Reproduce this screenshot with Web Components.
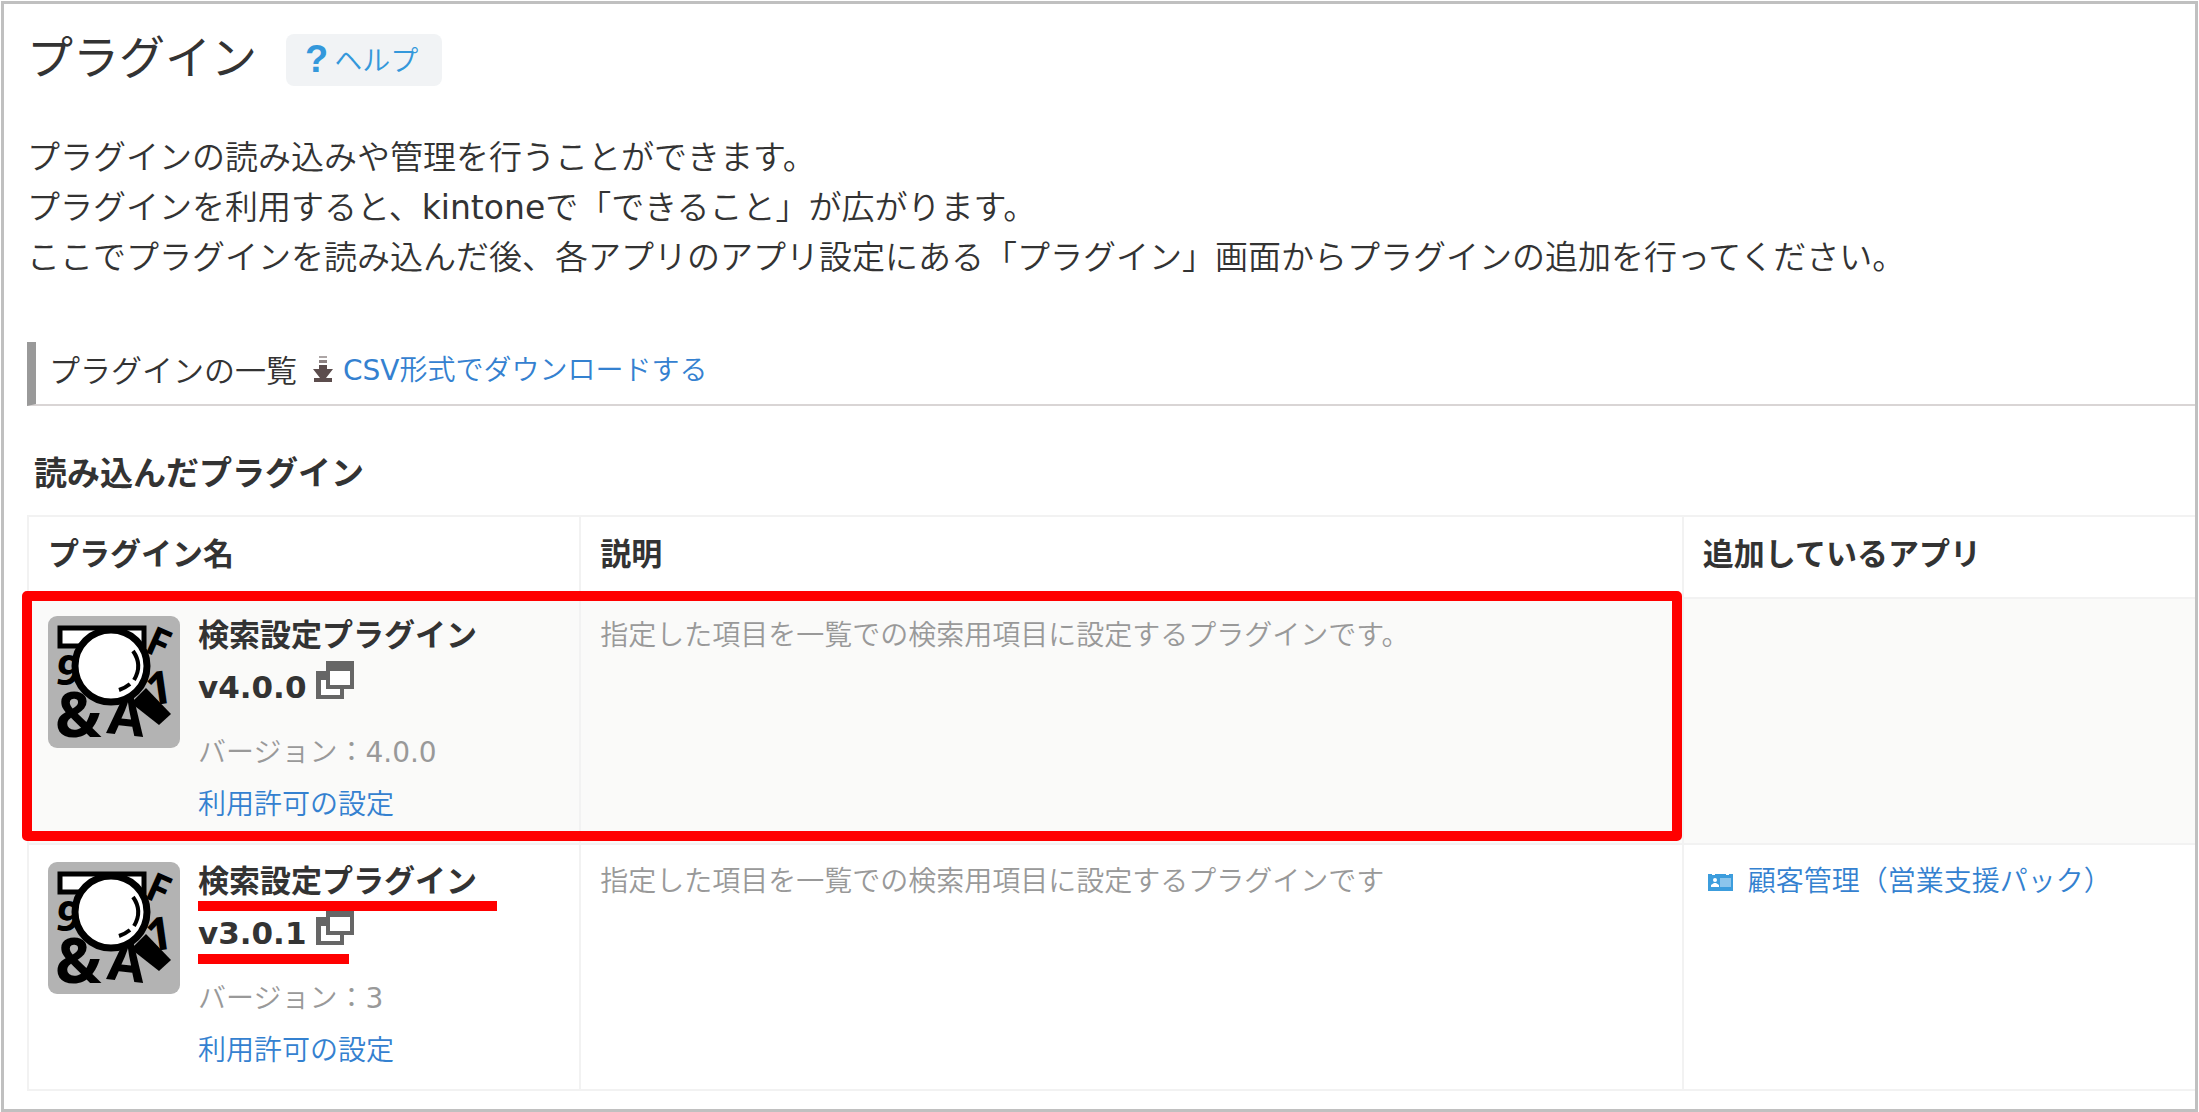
<!DOCTYPE html>
<html lang="ja">
<head>
<meta charset="utf-8">
<title>プラグイン</title>
<style>
    body {
        margin: 0;
        background: #fff;
        color: #333;
        font-family: "DejaVu Sans", "Noto Sans CJK JP DemiLight", "Noto Sans CJK JP", sans-serif;
        font-size: 28px;
        --bold: "DejaVu Sans", "Noto Sans CJK JP", sans-serif;
        --link: #3481d0;
        --muted: #999;
        --line: #f2f2f2;
        --mark: #f00;
    }
</style>
</head>
<body>
<plugin-page>
    <page-title slot="title" heading="プラグイン">ヘルプ</page-title>
    <p slot="lead">プラグインの読み込みや管理を行うことができます。<br>プラグインを利用すると、kintoneで「できること」が広がります。<br>ここでプラグインを読み込んだ後、各アプリのアプリ設定にある「プラグイン」画面からプラグインの追加を行ってください。</p>
    <section-bar heading="プラグインの一覧">CSV形式でダウンロードする</section-bar>
    <plugin-table heading="読み込んだプラグイン"></plugin-table>
</plugin-page>

<script>
class PluginPage extends HTMLElement {
    constructor() {
        super();
        this.attachShadow({ mode: 'open' });
        this.shadowRoot.innerHTML = `
            <style>
                :host {
                    display: block;
                    margin: 1px;
                    border: 3px solid #c0c0c0;
                    padding: 30px 0 18px 23px;
                }
                ::slotted(p) {
                    margin: 47px 0 59px;
                    font-size: 33px;
                    line-height: 50px;
                }
            </style>
            <slot name="title"></slot>
            <slot name="lead"></slot>
            <slot></slot>
        `;
    }
}
customElements.define('plugin-page', PluginPage);

class PageTitle extends HTMLElement {
    constructor() {
        super();
        this.attachShadow({ mode: 'open' });
        this.shadowRoot.innerHTML = `
            <style>
                :host {
                    display: flex;
                    align-items: center;
                    gap: 29px;
                    height: 52px;
                }
                h1 {
                    margin: 0;
                    font-family: var(--bold);
                    font-size: 46px;
                    font-weight: 400;
                    line-height: 48px;
                    padding-bottom: 4px;
                }
                a {
                    display: flex;
                    align-items: center;
                    box-sizing: border-box;
                    height: 52px;
                    padding: 0 24px 2px 19px;
                    border-radius: 8px;
                    background: #f1f3f5;
                    color: #3498db;
                    text-decoration: none;
                }
                b {
                    font-family: "Liberation Sans", sans-serif;
                    font-size: 38px;
                    font-weight: 700;
                    margin-right: 6px;
                }
            </style>
            <h1>${this.getAttribute('heading')}</h1>
            <a href="#help"><b aria-hidden="true">?</b><slot></slot></a>
        `;
    }
}
customElements.define('page-title', PageTitle);

class SectionBar extends HTMLElement {
    constructor() {
        super();
        this.attachShadow({ mode: 'open' });
        this.shadowRoot.innerHTML = `
            <style>
                :host {
                    display: flex;
                    align-items: center;
                    box-sizing: border-box;
                    height: 64px;
                    padding: 0 0 10px 13px;
                    border-left: 9px solid #999;
                    border-bottom: 2px solid #d9d5d5;
                }
                h2 {
                    margin: 0;
                    font-size: 31px;
                    font-weight: 400;
                }
                svg {
                    margin: 2px 10px 0 16px;
                }
                a {
                    color: var(--link);
                    text-decoration: none;
                }
            </style>
            <h2>${this.getAttribute('heading')}</h2>
            <svg width="20" height="26" viewBox="0 0 20 26" fill="#5c4d4d" aria-hidden="true">
                <path d="M6 0h8v2H6z" opacity=".5"/>
                <path d="M6 4h8v3H6z" opacity=".7"/>
                <path d="M6 9h8v4h6l-7 9h6v4H1v-4h6L0 13h6z"/>
            </svg>
            <a href="#csv"><slot></slot></a>
        `;
    }
}
customElements.define('section-bar', SectionBar);

class SearchIcon extends HTMLElement {
    constructor() {
        super();
        this.attachShadow({ mode: 'open' });
        this.shadowRoot.innerHTML = `
            <style>
                :host {
                    display: block;
                    flex: none;
                    width: 132px;
                    height: 132px;
                }
                svg {
                    display: block;
                    overflow: visible;
                }
                text {
                    font-family: "Noto Sans", sans-serif;
                    font-weight: 700;
                }
            </style>
            <svg width="132" height="132" viewBox="0 0 132 132" aria-hidden="true">
                <rect width="132" height="132" rx="9" fill="#b3b3b3"/>
                <rect x="12" y="12" width="84" height="18" fill="#fff" stroke="#000" stroke-width="5"/>
                <text font-size="42" transform="translate(6 67) rotate(10)">9</text>
                <text font-size="40" transform="translate(95 35) rotate(24)">F</text>
                <text font-size="46" transform="translate(100 90) rotate(-8)">1</text>
                <text font-size="62" x="7" y="121">&amp;</text>
                <text font-size="54" transform="translate(58 117) rotate(6)">A</text>
                <path d="M83 87l15-15 25 26-12 11z"/>
                <circle cx="63" cy="50" r="36" fill="#fff" stroke="#000" stroke-width="7"/>
                <path d="M85 35q10 14 1 29M82 68q-5 4-11 6" fill="none" stroke="#000" stroke-width="4"/>
            </svg>
        `;
    }
}
customElements.define('search-icon', SearchIcon);

class PluginItem extends HTMLElement {
    constructor() {
        super();
        this.attachShadow({ mode: 'open' });
        this.shadowRoot.innerHTML = `
            <style>
                :host {
                    display: flex;
                    gap: 18px;
                }
                h4 {
                    margin: 0 0 14px;
                    font-family: var(--bold);
                    font-size: 31px;
                    line-height: 52px;
                }
                .row {
                    display: flex;
                    align-items: center;
                    gap: 10px;
                }
                .row svg {
                    display: block;
                    margin-bottom: 14px;
                }
                .text {
                    margin-top: -7px;
                }
                p {
                    margin: 0;
                    color: var(--muted);
                    line-height: 52px;
                }
                a {
                    color: var(--link);
                    line-height: 52px;
                    text-decoration: none;
                }
                h4 span {
                    position: relative;
                }
                /* 赤の下線 */
                :host([marked]) h4 span::after {
                    content: "";
                    position: absolute;
                    left: 0;
                    bottom: -12px;
                    width: 299px;
                    height: 10px;
                    background: var(--mark);
                    z-index: 1;
                }
                :host([marked]) h4 .ver::after {
                    bottom: -5px;
                    width: 151px;
                }
            </style>
            <search-icon></search-icon>
            <div class="text">
                <h4>
                    <span class="name">${this.getAttribute('name')}</span>
                    <div class="row">
                        <span class="ver">${this.getAttribute('tag')}</span>
                        <a href="#detail" aria-label="詳細">
                            <svg width="38" height="38" viewBox="0 0 38 38" aria-hidden="true">
                                <path d="M0 10h28v28H0z" fill="#666"/>
                                <path d="M5 19h19v15H5z" fill="#fff"/>
                                <path d="M10 0h28v28H10z" fill="#666"/>
                                <path d="M14 10h20v14H14z" fill="#fff"/>
                            </svg>
                        </a>
                    </div>
                </h4>
                <p>バージョン：${this.getAttribute('version')}</p>
                <a href="#permission">利用許可の設定</a>
            </div>
        `;
    }
}
customElements.define('plugin-item', PluginItem);

class AppLink extends HTMLElement {
    constructor() {
        super();
        this.attachShadow({ mode: 'open' });
        this.shadowRoot.innerHTML = `
            <style>
                :host {
                    display: block;
                }
                a {
                    display: flex;
                    align-items: center;
                    gap: 15px;
                    padding-left: 5px;
                    color: var(--link);
                    text-decoration: none;
                }
            </style>
            <a href="#app">
                <svg width="25" height="17" viewBox="0 0 25 17" aria-hidden="true">
                    <path d="M0 0h4v1h3V0h11v1h3V0h4v17H0z" fill="#3c9ddd"/>
                    <path d="M12 4h11v9H12z" fill="#8cc5ec"/>
                    <circle cx="7" cy="6" r="2" fill="#fff"/>
                    <path d="M3 13v-2l3-2h2l3 2v2z" fill="#fff"/>
                </svg>
                <slot></slot>
            </a>
        `;
    }
}
customElements.define('app-link', AppLink);

class PluginTable extends HTMLElement {
    constructor() {
        super();
        this.attachShadow({ mode: 'open' });
        this.shadowRoot.innerHTML = `
            <style>
                :host {
                    display: block;
                }
                h3 {
                    margin: 43px 0 16px 7px;
                    font-family: var(--bold);
                    font-size: 33px;
                    line-height: 50px;
                }
                table {
                    width: 100%;
                    table-layout: fixed;
                    border-collapse: separate;
                    border-spacing: 0;
                    border-top: 2px solid var(--line);
                    border-left: 2px solid var(--line);
                }
                .name { width: 25.5%; }
                .desc { width: 50.9%; }
                th, td {
                    box-sizing: border-box;
                    border-bottom: 2px solid var(--line);
                    border-right: 2px solid var(--line);
                    text-align: left;
                    vertical-align: top;
                }
                th:last-child, td:last-child {
                    border-right: 0;
                }
                th {
                    padding: 11px 19px 17px;
                    font-family: var(--bold);
                    font-size: 31px;
                    line-height: 52px;
                }
                td {
                    height: 246px;
                    padding: 17px 19px 0;
                    line-height: 40px;
                    color: var(--muted);
                }
                plugin-item {
                    color: #333;
                }
                tbody tr {
                    position: relative;
                }
                tbody tr:nth-child(odd) {
                    background: #fafaf9;
                }
                /* 1行目を囲む赤枠 */
                .frame {
                    position: absolute;
                    box-sizing: border-box;
                    left: -7px;
                    top: -8px;
                    width: calc(76.4% + 5px);
                    height: 250px;
                    border: 10px solid var(--mark);
                    border-radius: 5px;
                    pointer-events: none;
                }
            </style>
            <h3>${this.getAttribute('heading')}</h3>
            <table>
                <thead>
                    <tr>
                        <th class="name">プラグイン名</th>
                        <th class="desc">説明</th>
                        <th>追加しているアプリ</th>
                    </tr>
                </thead>
                <tbody>
                    <tr>
                        <td><div class="frame"></div><plugin-item name="検索設定プラグイン" tag="v4.0.0" version="4.0.0"></plugin-item></td>
                        <td>指定した項目を一覧での検索用項目に設定するプラグインです。</td>
                        <td></td>
                    </tr>
                    <tr>
                        <td><plugin-item name="検索設定プラグイン" tag="v3.0.1" version="3" marked></plugin-item></td>
                        <td>指定した項目を一覧での検索用項目に設定するプラグインです</td>
                        <td><app-link>顧客管理（営業支援パック）</app-link></td>
                    </tr>
                </tbody>
            </table>
        `;
    }
}
customElements.define('plugin-table', PluginTable);
</script>
</body>
</html>
